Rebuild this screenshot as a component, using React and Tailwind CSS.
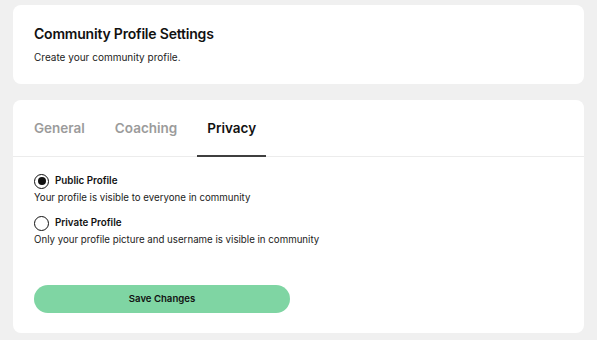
import React, { useState } from 'react';

const tabs = ['General', 'Coaching', 'Privacy'];

const options = [
  { id: 'public', label: 'Public Profile', desc: 'Your profile is visible to everyone in community' },
  { id: 'private', label: 'Private Profile', desc: 'Only your profile picture and username is visible in community' },
];

const App = () => {
  const [tab, setTab] = useState('Privacy');
  const [privacy, setPrivacy] = useState('public');

  return (
    <div className="min-h-screen bg-[#f0f0f0] px-[13px] pt-[5px] pb-2 font-['Inter',sans-serif] text-[#111]">
      <div className="bg-white rounded-[8px] h-[79px] px-[21px] pt-[19px]">
        <h1 className="text-[14px] leading-5 font-semibold tracking-[-0.2px]">Community Profile Settings</h1>
        <p className="text-[10px] leading-4 mt-[5px] text-[#222]">Create your community profile.</p>
      </div>

      <div className="bg-white rounded-[8px] mt-4 h-[233px] flex flex-col">
        <div className="flex gap-[10px] pl-[11px] border-b border-[#ececec] h-[57px]">
          {tabs.map((t) => (
            <button
              key={t}
              onClick={() => setTab(t)}
              className={`relative px-[10px] h-full flex items-center text-[13.5px] font-semibold ${
                tab === t ? 'text-[#111]' : 'text-[#9b9b9b]'
              }`}
            >
              {t}
              {tab === t && <span className="absolute left-0 right-0 -bottom-px h-[2px] bg-[#3f3f3f]" />}
            </button>
          ))}
        </div>

        <div className="px-[21px] pt-[16px] flex flex-col gap-[9px]">
          {options.map((o) => (
            <label key={o.id} className="flex flex-col cursor-pointer" onClick={() => setPrivacy(o.id)}>
              <span className="flex items-center gap-[6px] h-4">
                <span className="w-[15px] h-[15px] rounded-full border-[1.5px] border-[#111] flex items-center justify-center">
                  {privacy === o.id && <span className="w-[8px] h-[8px] rounded-full bg-[#111]" />}
                </span>
                <span className="text-[9.8px] font-semibold">{o.label}</span>
              </span>
              <span className="text-[9.7px] leading-4 mt-[1px] text-[#222]">{o.desc}</span>
            </label>
          ))}
        </div>

        <div className="px-[21px] mt-auto pb-[20px]">
          <button className="w-[256px] h-[28px] rounded-full bg-[#7fd5a3] text-[9.6px] font-semibold text-[#111]">
            Save Changes
          </button>
        </div>
      </div>
    </div>
  );
};

export default App;
